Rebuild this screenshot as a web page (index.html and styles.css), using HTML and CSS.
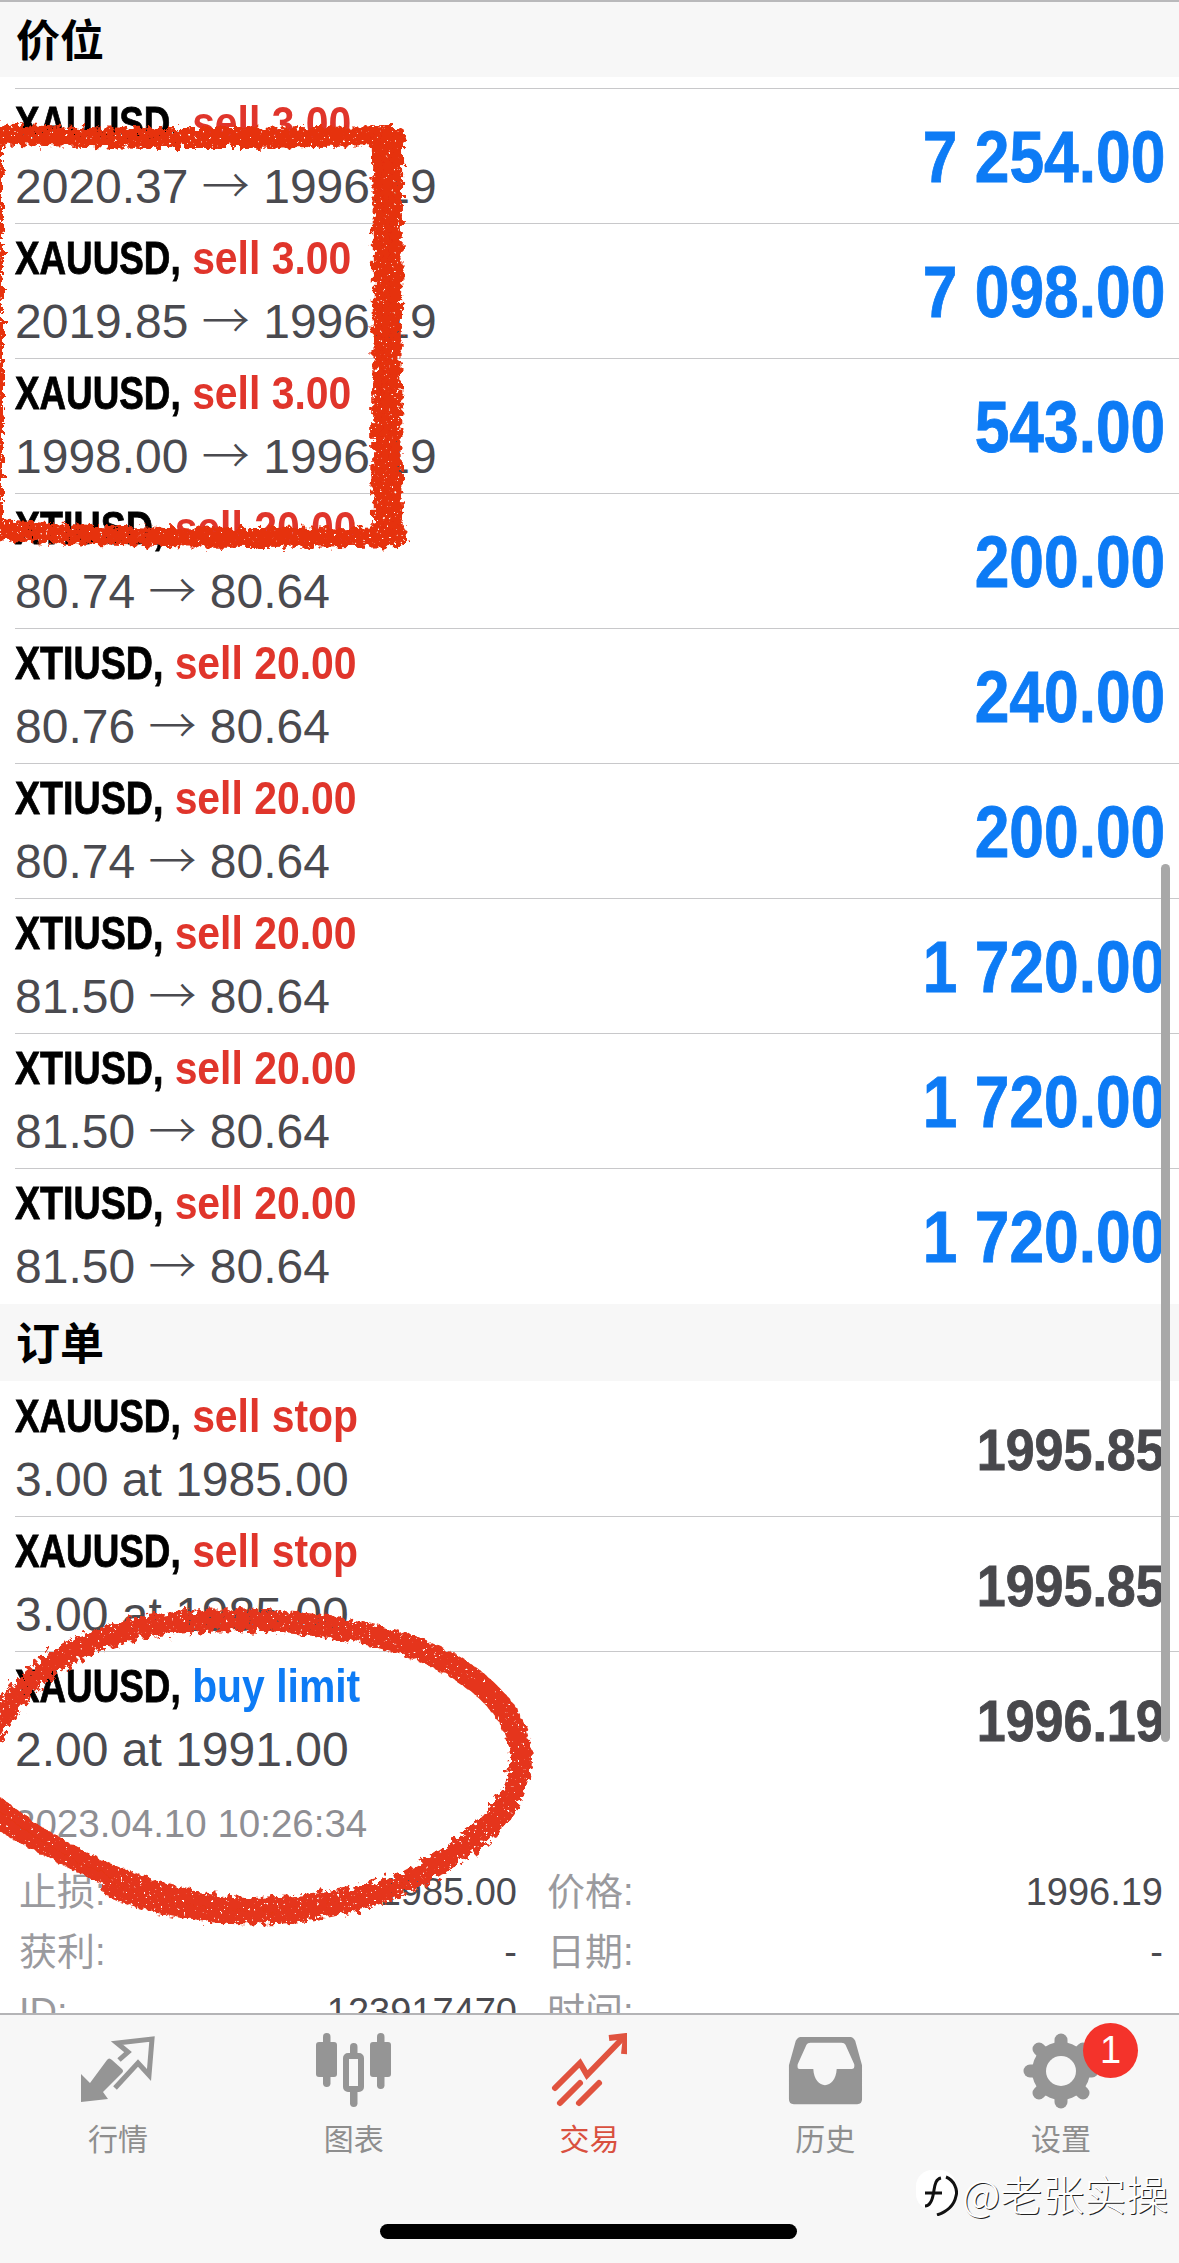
FILE: index.html
```html
<!DOCTYPE html>
<html>
<head>
  <meta name="viewport" content="width=device-width, initial-scale=1">
  <link rel="stylesheet" href="styles.css">
</head>
<body>
  <div class="screen">
    <div class="scroller">
      <div class="sectionHead topHead">价位</div>
      <div class="list firstList">
        <div class="row"><div class="rowText"><p class="title"><b>XAUUSD,</b> <span class="red">sell 3.00</span></p><p class="sub">2020.37 <span class="arrow">→</span> 1996.19</p></div><div class="amount">7 254.00</div></div>
        <div class="row"><div class="rowText"><p class="title"><b>XAUUSD,</b> <span class="red">sell 3.00</span></p><p class="sub">2019.85 <span class="arrow">→</span> 1996.19</p></div><div class="amount">7 098.00</div></div>
        <div class="row"><div class="rowText"><p class="title"><b>XAUUSD,</b> <span class="red">sell 3.00</span></p><p class="sub">1998.00 <span class="arrow">→</span> 1996.19</p></div><div class="amount">543.00</div></div>
        <div class="row"><div class="rowText"><p class="title"><b class="xti">XTIUSD,</b> <span class="red">sell 20.00</span></p><p class="sub">80.74 <span class="arrow">→</span> 80.64</p></div><div class="amount">200.00</div></div>
        <div class="row"><div class="rowText"><p class="title"><b class="xti">XTIUSD,</b> <span class="red">sell 20.00</span></p><p class="sub">80.76 <span class="arrow">→</span> 80.64</p></div><div class="amount">240.00</div></div>
        <div class="row"><div class="rowText"><p class="title"><b class="xti">XTIUSD,</b> <span class="red">sell 20.00</span></p><p class="sub">80.74 <span class="arrow">→</span> 80.64</p></div><div class="amount">200.00</div></div>
        <div class="row"><div class="rowText"><p class="title"><b class="xti">XTIUSD,</b> <span class="red">sell 20.00</span></p><p class="sub">81.50 <span class="arrow">→</span> 80.64</p></div><div class="amount">1 720.00</div></div>
        <div class="row"><div class="rowText"><p class="title"><b class="xti">XTIUSD,</b> <span class="red">sell 20.00</span></p><p class="sub">81.50 <span class="arrow">→</span> 80.64</p></div><div class="amount">1 720.00</div></div>
        <div class="row"><div class="rowText"><p class="title"><b class="xti">XTIUSD,</b> <span class="red">sell 20.00</span></p><p class="sub">81.50 <span class="arrow">→</span> 80.64</p></div><div class="amount">1 720.00</div></div>
      </div>
      <div class="sectionHead">订单</div>
      <div class="list">
        <div class="row"><div class="rowText"><p class="title"><b>XAUUSD,</b> <span class="red">sell stop</span></p><p class="sub">3.00 at 1985.00</p></div><div class="amount gray">1995.85</div></div>
        <div class="row"><div class="rowText"><p class="title"><b>XAUUSD,</b> <span class="red">sell stop</span></p><p class="sub">3.00 at 1985.00</p></div><div class="amount gray">1995.85</div></div>
        <div class="row"><div class="rowText"><p class="title"><b>XAUUSD,</b> <span class="blue">buy limit</span></p><p class="sub">2.00 at 1991.00</p></div><div class="amount gray">1996.19</div></div>
      </div>
      <p class="stamp">2023.04.10 10:26:34</p>
      <div class="details">
        <div class="cell"><span>止损:</span><em>1985.00</em></div>
        <div class="cell"><span>价格:</span><em>1996.19</em></div>
        <div class="cell"><span>获利:</span><em>-</em></div>
        <div class="cell"><span>日期:</span><em>-</em></div>
        <div class="cell"><span>ID:</span><em>123917470</em></div>
        <div class="cell"><span>时间:</span><em>-</em></div>
      </div>
    </div>

    <div class="tabbar">
      <div class="tab">
        <svg viewBox="0 0 76 76" width="76" height="76"><path d="M1 41 L10 50 L27 27 Q29 24 32 27 L42 36 Q44 38 42 40 L23 59 L28 66 L1 69 Z" fill="#959595"/><path d="M35 55 L58 30 L69 42 L72 6 L37 10 L48 19 L39 27" fill="none" stroke="#959595" stroke-width="5"/></svg>
        <span>行情</span>
      </div>
      <div class="tab">
        <svg viewBox="0 0 76 76" width="76" height="76"><g fill="#959595"><rect x="7" y="0" width="7.5" height="54" rx="3.7"/><rect x="0" y="9" width="21" height="35" rx="3"/><rect x="61" y="0" width="7.5" height="56" rx="3.7"/><rect x="54" y="9" width="21" height="35" rx="3"/><rect x="34" y="10" width="7.5" height="64" rx="3.7"/></g><rect x="30" y="23" width="15" height="33" rx="2" fill="#f7f7f7" stroke="#959595" stroke-width="6"/></svg>
        <span>图表</span>
      </div>
      <div class="tab active">
        <svg viewBox="0 0 76 76" width="76" height="76" fill="none" stroke="#e0533f" stroke-width="6" stroke-linecap="round"><path d="M4 55 L29 30 L36 42 L72 5"/><path d="M58 5 L75 3 L73 21" stroke-linecap="butt"/><path d="M9 70 L29 50"/><path d="M28 70 L48 50"/></svg>
        <span>交易</span>
      </div>
      <div class="tab">
        <svg viewBox="0 0 78 76" width="76" height="76"><path fill-rule="evenodd" fill="#959595" d="M14 3 H65 Q68 3 70 7 L77 32 V67 Q77 72 72 72 H7 Q2 72 2 67 V32 L9 7 Q11 3 14 3 Z M24 9 Q21 9 20 11 L11 31 Q10 36 13 36 H27 C28 58 50 58 51 36 H66 Q70 36 69 31 L60 11 Q59 9 56 9 Z"/></svg>
        <span>历史</span>
      </div>
      <div class="tab">
        <svg viewBox="0 0 76 76" width="76" height="76"><circle cx="38" cy="38" r="29" fill="#959595"/><g stroke="#959595" stroke-width="13" stroke-linecap="round"><path d="M38 7 V69"/><path d="M7 38 H69"/><path d="M16 16 L60 60"/><path d="M60 16 L16 60"/></g><circle cx="38" cy="38" r="15" fill="#f7f7f7"/></svg>
        <span>设置</span>
        <i class="badge">1</i>
      </div>
    </div>
    <div class="homeBar"></div>
    <div class="scrollThumb"></div>
    <div class="mark"><svg viewBox="0 0 42 46" width="42" height="46"><rect x="0" y="0" width="40" height="40" rx="16" fill="#fff"/><path d="M9 36 C15 36 17 28 18 20 C19 14 20 9 25 8 M9 23 H26 M30 7 C38 10 42 20 40 26 C38 36 30 42 21 45" fill="none" stroke="#111" stroke-width="3"/></svg><span>@老张实操</span></div>

    <svg class="ink" viewBox="0 0 1179 2263" width="1179" height="2263">
      <defs>
        <filter id="rough" x="-5%" y="-5%" width="110%" height="110%">
          <feTurbulence type="fractalNoise" baseFrequency="0.16" numOctaves="3" seed="4" result="wobble"/>
          <feDisplacementMap in="SourceGraphic" in2="wobble" scale="14" result="moved"/>
          <feTurbulence type="fractalNoise" baseFrequency="0.35" numOctaves="2" seed="9"/>
          <feColorMatrix values="0 0 0 0 0  0 0 0 0 0  0 0 0 0 0  0 0 0 12 -2.6" result="holes"/>
          <feComposite in="moved" in2="holes" operator="in"/>
        </filter>
      </defs>
      <g filter="url(#rough)" fill="none" stroke="#e6300e" stroke-linecap="round">
        <path stroke-width="20" d="M-5 134 C120 140 260 138 396 136"/>
        <path stroke-width="13" d="M378 136 C382 280 376 420 380 535"/>
        <path stroke-width="13" d="M388 136 C392 280 384 420 390 538"/>
        <path stroke-width="12" d="M397 138 C398 280 392 420 398 530"/>
        <path stroke-width="20" d="M398 536 C260 540 120 538 -5 530"/>
        <path stroke-width="8" d="M-1 136 V532"/>
      </g>
      <g filter="url(#rough)" fill="none" stroke="#e5351a" stroke-linecap="round">
        <path stroke-width="22" d="M-6 1730 C20 1680 70 1640 150 1626 C230 1615 330 1620 400 1643 C470 1665 522 1710 521 1760 C520 1810 470 1850 400 1885 C340 1905 280 1908 245 1908 C160 1905 70 1860 -6 1815"/>
        <path stroke-width="14" d="M110 1890 C170 1915 240 1922 300 1915 C340 1910 370 1900 400 1890"/>
        <path stroke-width="12" d="M-6 1800 C40 1835 80 1860 130 1878"/>
      </g>
    </svg>
  </div>
</body>
</html>
```
FILE: styles.css
```css
* {
  box-sizing: border-box;
}
html, body {
  margin: 0;
  padding: 0;
  background-color: #fff;
}
.screen {
  position: relative;
  width: 1179px;
  height: 2263px;
  overflow: hidden;
  font-family: "Liberation Sans", "Noto Sans CJK SC", sans-serif;
}
.scroller {
  height: 2013px;
  overflow: hidden;
}

.sectionHead {
  height: 77px;
  padding: 9px 16px 0;
  background-color: #f7f7f7;
  font-family: "Noto Sans CJK SC", sans-serif;
  font-size: 44px;
  line-height: 56px;
  font-weight: bold;
  color: #000;
}
.topHead {
  border-top: 2px solid #b9b9bb;
  padding-top: 8px;
}
.firstList {
  padding-top: 11px;
  padding-bottom: 1px;
}

.row {
  display: flex;
  justify-content: space-between;
  align-items: center;
  height: 135px;
  margin-left: 15px;
  padding-right: 14px;
  border-top: 1px solid #c8c8ca;
}
.list:not(.firstList) > .row:first-child {
  border-top: none;
}
.title, .sub {
  margin: 0;
  white-space: nowrap;
}
/* the app font is a condensed bold, squeeze Arial bold to get there */
.title {
  margin-top: -2px;
  font-size: 47px;
  line-height: 58px;
  font-weight: bold;
  color: #000;
  transform: scaleX(0.87);
  transform-origin: left center;
}
.title b {
  display: inline-block;
  margin-right: -21px;
  -webkit-text-stroke: 0.8px #000;
  transform: scaleX(0.9);
  transform-origin: left center;
}
.title b.xti {
  margin-right: -15px;
  transform: scaleX(0.92);
}
.red {
  color: #e0352b;
}
.blue {
  color: #0d7bf5;
}
.sub {
  margin-top: 6px;
  font-size: 48px;
  line-height: 58px;
  color: #4a4a4f;
}
.arrow {
  font-family: "Noto Sans CJK SC", sans-serif;
  font-weight: 300;
  line-height: 0;
}
.amount {
  margin-top: 2px;
  font-size: 72px;
  font-weight: bold;
  color: #0d7bf5;
  -webkit-text-stroke: 0.8px #0d7bf5;
  white-space: nowrap;
  transform: scaleX(0.865);
  transform-origin: right center;
}
.amount.gray {
  font-size: 58px;
  color: #48484c;
  -webkit-text-stroke: 0.8px #48484c;
  transform: scaleX(0.896);
}

.stamp {
  margin: 13px 0 0 14px;
  font-size: 38.5px;
  line-height: 50px;
  color: #8e8e93;
}
.details {
  display: grid;
  grid-template-columns: 498px 616px;
  column-gap: 30px;
  padding: 13px 0 0 19px;
  font-size: 38px;
  line-height: 60px;
}
.cell {
  display: flex;
  justify-content: space-between;
}
.cell span {
  color: #9a9a9e;
}
.cell em {
  font-style: normal;
  color: #4a4a4f;
}

.tabbar {
  display: flex;
  height: 250px;
  padding-top: 18px;
  background-color: #f7f7f7;
  border-top: 2px solid #b4b4b6;
}
.tab {
  position: relative;
  flex: 1;
  display: flex;
  flex-direction: column;
  align-items: center;
  height: 126px;
  color: #8e8e8e;
  font-family: "Noto Sans CJK SC", sans-serif;
  font-size: 30px;
}
.tab svg {
  flex: none;
}
.tab span {
  line-height: 42px;
  margin-top: 7px;
}
.tab.active {
  color: #d9503f;
}
.badge {
  position: absolute;
  left: 140px;
  top: -10px;
  width: 55px;
  height: 55px;
  border-radius: 50%;
  background-color: #f4332b;
  color: #fff;
  font-style: normal;
  font-family: "Liberation Sans", sans-serif;
  font-size: 38px;
  line-height: 54px;
  text-align: center;
}
.homeBar {
  position: absolute;
  left: 380px;
  top: 2224px;
  width: 417px;
  height: 15px;
  border-radius: 8px;
  background-color: #000;
}
.scrollThumb {
  position: absolute;
  left: 1161px;
  top: 864px;
  width: 9px;
  height: 878px;
  border-radius: 5px;
  background-color: #a8a8a8;
}
.mark {
  position: absolute;
  left: 916px;
  top: 2170px;
  display: flex;
  align-items: flex-start;
  gap: 4px;
  font-family: "Noto Sans CJK SC", sans-serif;
  font-size: 42px;
  font-weight: 300;
  line-height: 46px;
  color: #fff;
  text-shadow: 1px 1px 0 #222;
}
.ink {
  position: absolute;
  left: 0;
  top: 0;
  pointer-events: none;
}
```
